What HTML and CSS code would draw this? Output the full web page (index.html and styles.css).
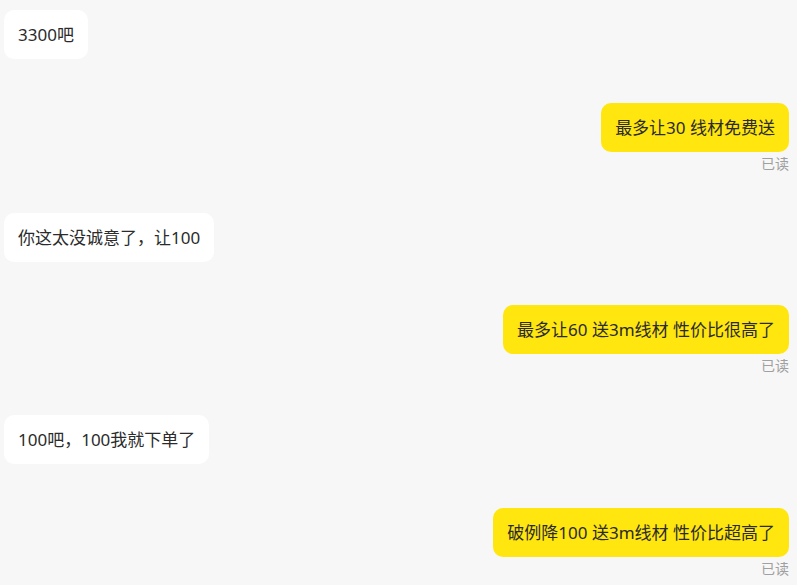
FILE: index.html
```html
<!DOCTYPE html>
<html lang="zh-CN">
<head>
<meta charset="utf-8">
<link rel="stylesheet" href="styles.css">
</head>
<body>
<div class="chat">
  <div class="row left"><div class="bubble">3300吧</div></div>
  <div class="row right"><div class="bubble">最多让30 线材免费送</div><div class="read">已读</div></div>
  <div class="row left"><div class="bubble">你这太没诚意了，让100</div></div>
  <div class="row right"><div class="bubble">最多让60 送3m线材 性价比很高了</div><div class="read">已读</div></div>
  <div class="row left"><div class="bubble">100吧，100我就下单了</div></div>
  <div class="row right"><div class="bubble">破例降100 送3m线材 性价比超高了</div><div class="read">已读</div></div>
</div>
</body>
</html>
```
FILE: styles.css
```css
html, body {
  margin: 0;
  padding: 0;
  background: #f7f7f7;
}
body {
  font-family: "Noto Sans", "Noto Sans CJK SC", sans-serif;
  color: #2b2b2b;
}
.chat {
  display: flex;
  flex-direction: column;
  padding: 10px 8px 0 4px;
}
.row {
  display: flex;
  flex-direction: column;
}
.row.left {
  align-items: flex-start;
  margin-bottom: 43.5px;
}
.row.right {
  align-items: flex-end;
  margin-bottom: 39px;
}
.bubble {
  font-size: 17px;
  line-height: 25px;
  padding: 12px 14px;
  border-radius: 10px;
  background: #fff;
  white-space: nowrap;
}
.right .bubble {
  background: #ffe60f;
}
.read {
  font-size: 14px;
  line-height: 20px;
  color: #a0a0a0;
  margin-top: 2px;
}
```
